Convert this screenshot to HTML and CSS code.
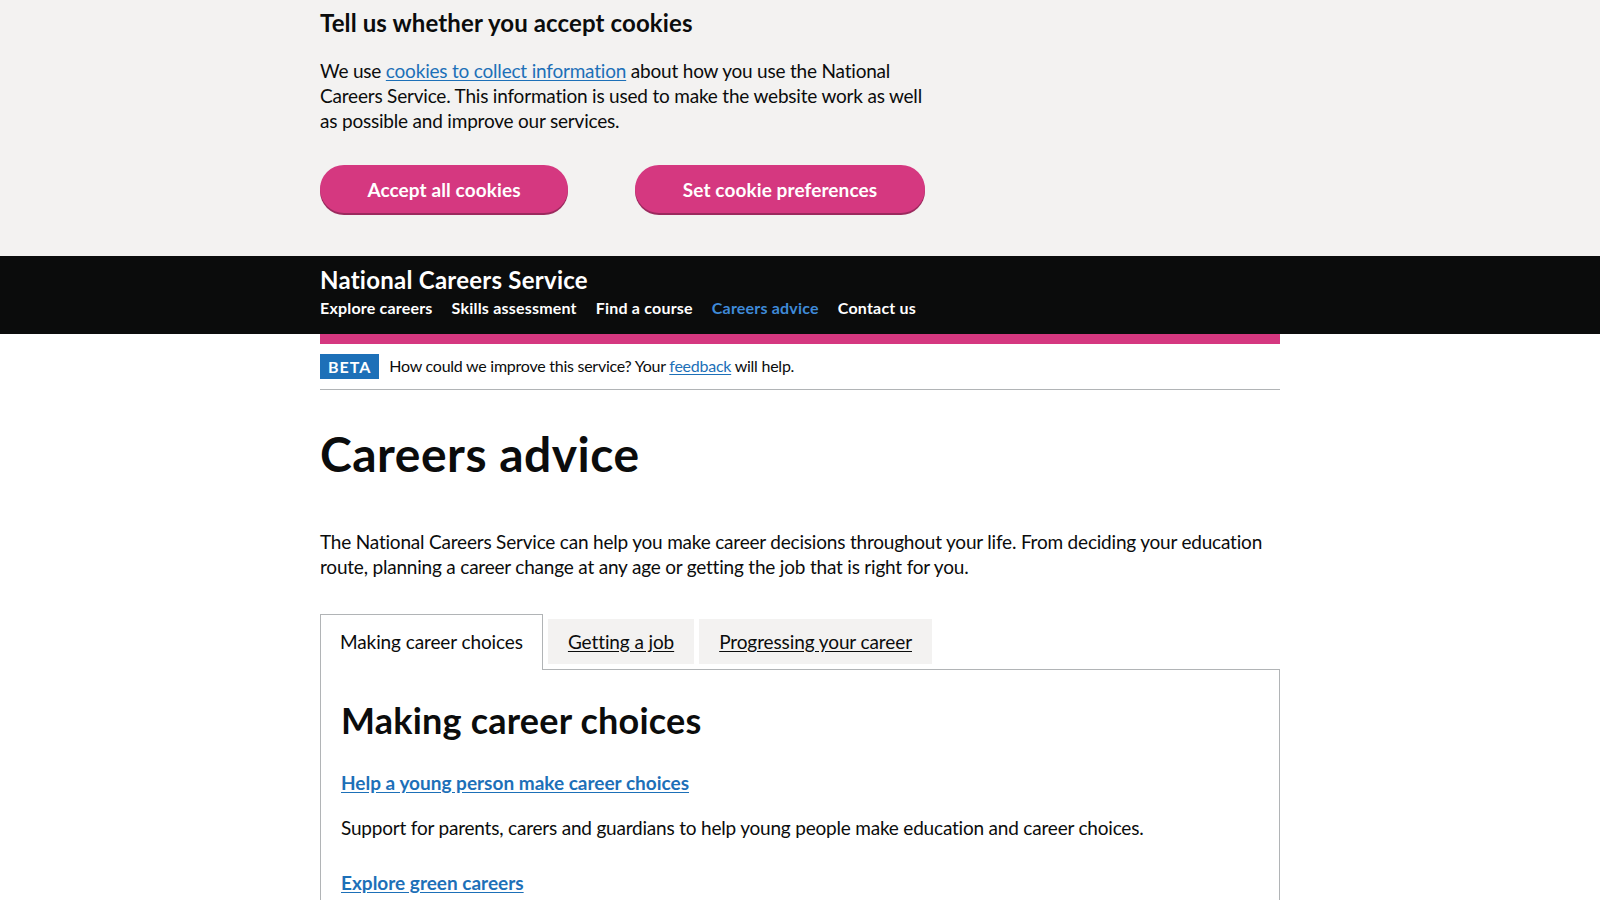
FILE: index.html
```html
<!DOCTYPE html>
<html lang="en">
<head>
<meta charset="utf-8">
<title>Careers advice | National Careers Service</title>
<link rel="stylesheet" href="styles.css">
</head>
<body>
<div class="cookie-banner">
  <div class="container">
    <div class="two-thirds">
      <h2 class="cookie-title">Tell us whether you accept cookies</h2>
      <p class="cookie-text">We use <a href="#" class="link">cookies to collect information</a> about how you use the National Careers Service. This information is used to make the website work as well as possible and improve our services.</p>
    </div>
    <div class="cookie-actions">
      <button class="btn btn-accept" type="button">Accept all cookies</button>
      <button class="btn btn-prefs" type="button">Set cookie preferences</button>
    </div>
  </div>
</div>

<header class="site-header">
  <div class="container">
    <a href="#" class="service-name">National Careers Service</a>
    <nav class="nav">
      <a href="#" class="nav-link">Explore careers</a>
      <a href="#" class="nav-link">Skills assessment</a>
      <a href="#" class="nav-link">Find a course</a>
      <a href="#" class="nav-link nav-link-active">Careers advice</a>
      <a href="#" class="nav-link">Contact us</a>
    </nav>
  </div>
</header>

<div class="container">
  <div class="pink-bar"></div>
  <div class="phase-banner">
    <strong class="tag">Beta</strong>
    <span class="phase-text">How could we improve this service? Your <a href="#" class="link">feedback</a> will help.</span>
  </div>

  <main class="main">
    <h1 class="page-title">Careers advice</h1>
    <p class="lead">The National Careers Service can help you make career decisions throughout your life. From deciding your education route, planning a career change at any age or getting the job that is right for you.</p>

    <div class="tabs">
      <ul class="tab-list">
        <li class="tab tab-selected"><a href="#" class="tab-link">Making career choices</a></li>
        <li class="tab"><a href="#" class="tab-link">Getting a job</a></li>
        <li class="tab"><a href="#" class="tab-link">Progressing your career</a></li>
      </ul>
      <div class="tab-panel">
        <h2 class="panel-title">Making career choices</h2>
        <h3 class="item-title"><a href="#" class="link">Help a young person make career choices</a></h3>
        <p class="body">Support for parents, carers and guardians to help young people make education and career choices.</p>
        <h3 class="item-title"><a href="#" class="link">Explore green careers</a></h3>
        <p class="body">Find out about jobs that help the environment and how to get into them.</p>
      </div>
    </div>
  </main>
</div>
</body>
</html>
```
FILE: styles.css
```css
* { box-sizing: border-box; }
html, body { margin: 0; padding: 0; background: #fff; }
body {
  font-family: Lato, "Liberation Sans", Arial, sans-serif;
  color: #0b0c0c;
  font-size: 19px;
  line-height: 25px;
  letter-spacing: -0.2px;
}
.container { width: 960px; margin: 0 auto; }
.link { color: #1d70b8; text-decoration: underline; text-underline-offset: 2px; }

/* cookie banner */
.cookie-banner { background: #f3f2f1; padding: 8px 0 43px; }
.two-thirds { width: 610px; }
.cookie-title { margin: 0 0 20px; font-size: 24px; line-height: 30px; font-weight: 700; letter-spacing: 0.12px; }
.cookie-text { margin: 0 0 32px; }
.cookie-actions { display: flex; gap: 67px; }
.btn {
  height: 48px;
  border: 0;
  border-radius: 24px;
  background: #d53880;
  color: #fff;
  font: 700 19px/25px Lato, "Liberation Sans", Arial, sans-serif;
  letter-spacing: 0.1px;
  box-shadow: 0 2px 0 #9b2a5e;
  cursor: pointer;
}
.btn-accept { width: 248px; }
.btn-prefs { width: 290px; }

/* header */
.site-header { background: #0b0c0c; padding: 9px 0 16px; }
.service-name { display: block; color: #fff; text-decoration: none; font-weight: 700; font-size: 24px; line-height: 30px; letter-spacing: 0.25px; }
.nav { display: flex; gap: 19px; margin-top: 3px; }
.nav-link { color: #fff; text-decoration: none; font-weight: 700; font-size: 16px; line-height: 20px; letter-spacing: 0.2px; }
.nav-link-active { color: #3f8ad8; }

.pink-bar { height: 10px; background: #d53880; }

.phase-banner { display: flex; align-items: center; gap: 10px; padding: 10px 0; border-bottom: 1px solid #b1b4b6; font-size: 16px; line-height: 20px; letter-spacing: -0.25px; }
.phase-text { position: relative; top: -1px; }
.tag { display: inline-block; background: #1d70b8; color: #fff; text-transform: uppercase; letter-spacing: 1px; font-size: 16px; line-height: 21px; padding: 2px 8px; font-weight: 700; }

.main { padding-top: 39px; }
.page-title { margin: 0 0 50px; font-size: 48px; line-height: 50px; font-weight: 700; letter-spacing: 0.5px; }
.lead { margin: 0 0 40px; }

.tab-list { display: flex; align-items: flex-start; list-style: none; margin: 0; padding: 0; }
.tab { margin-right: 5px; padding: 10px 20px; background: #f3f2f1; letter-spacing: -0.1px; }
.tab-link { color: #0b0c0c; text-decoration: underline; text-underline-offset: 2px; }
.tab-selected { position: relative; margin-top: -5px; margin-bottom: -1px; padding: 14px 19px 16px; border: 1px solid #b1b4b6; border-bottom: 0; background: #fff; }
.tab-selected .tab-link { text-decoration: none; }
.tab-panel { border: 1px solid #b1b4b6; padding: 30px 20px; }
.panel-title { margin: 0 0 30px; font-size: 36px; line-height: 40px; font-weight: 700; letter-spacing: 0.2px; }
.item-title { margin: 0 0 20px; font-size: 19px; line-height: 25px; font-weight: 700; letter-spacing: 0; }
.body { margin: 0 0 30px; }
```
